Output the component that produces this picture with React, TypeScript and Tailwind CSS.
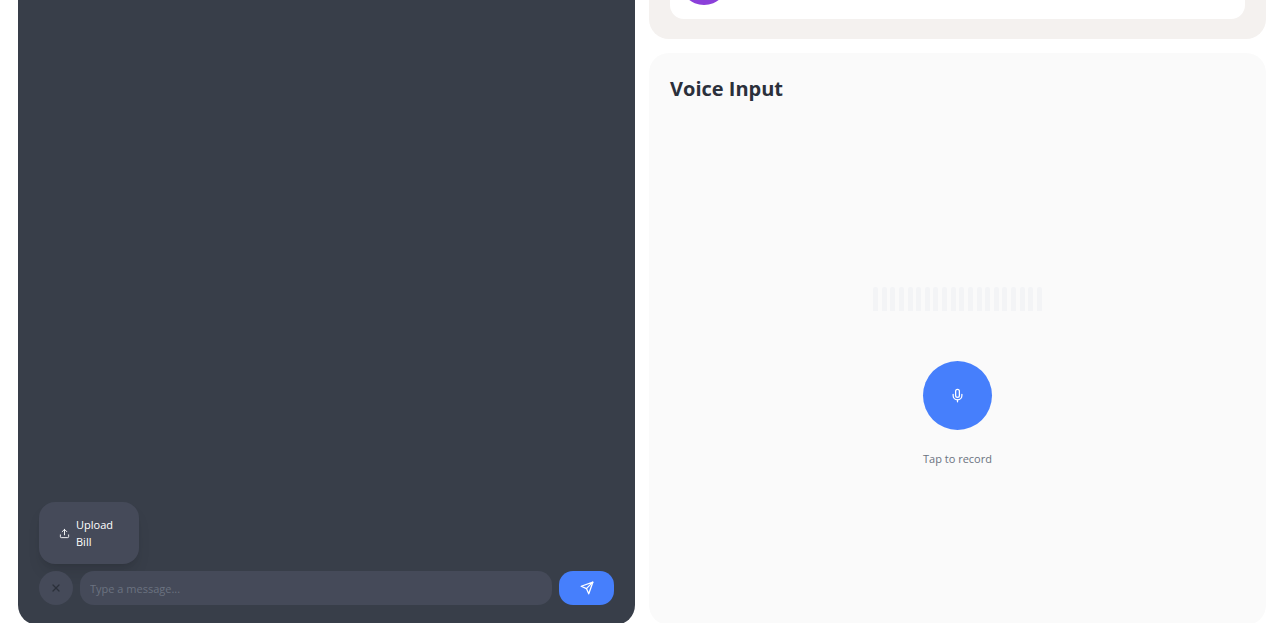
import React from 'react';
import { Mic, Upload, X } from 'lucide-react';

const BAR_COUNT = 20;

const SendIcon: React.FC = () => (
  <svg
    viewBox="0 0 24 24"
    className="size-3.5"
    fill="none"
    stroke="currentColor"
    strokeWidth="2.2"
    strokeLinecap="round"
    strokeLinejoin="round"
    aria-hidden="true"
  >
    <path d="m22 2-7 20-4-9-9-4Z" />
    <path d="M22 2 11 13" />
  </svg>
);

const ChatPanel: React.FC = () => (
  <section className="flex flex-col justify-end rounded-b-[20px] bg-[#383e49] px-[21px] py-5">
    <div className="mb-[7px] w-[100px] rounded-2xl bg-[#454a59] p-2 shadow-lg">
      <button className="flex w-full items-center gap-1.5 py-1.5 pl-3 text-left text-[11px] leading-[17px] text-white">
        <Upload className="size-[11px] shrink-0" />
        <span className="w-10">Upload Bill</span>
      </button>
    </div>
    <form className="flex gap-[7px]" onSubmit={e => e.preventDefault()}>
      <button
        type="button"
        aria-label="Close menu"
        className="flex size-[34px] shrink-0 items-center justify-center rounded-full bg-[#454a59] text-[#2b303a]"
      >
        <X className="size-3" strokeWidth={2.5} />
      </button>
      <input
        type="text"
        aria-label="Message"
        placeholder="Type a message..."
        className="h-[34px] min-w-0 flex-1 rounded-[14px] bg-[#454a59] px-2.5 text-[11px] text-white outline-none placeholder:text-[#6b7280]"
      />
      <button
        type="submit"
        aria-label="Send"
        className="flex h-[34px] w-[55px] shrink-0 items-center justify-center rounded-[14px] bg-[#467ffc] text-white"
      >
        <SendIcon />
      </button>
    </form>
  </section>
);

const SummaryPanel: React.FC = () => (
  <section className="rounded-b-[20px] bg-[#f4f1ef] px-[21px] pb-5">
    <div className="h-[19px] overflow-hidden rounded-b-[14px] bg-white px-2.5">
      <div className="-mt-[43px] size-12 rounded-full bg-[#8b3fd9]" />
    </div>
  </section>
);

const VoicePanel: React.FC = () => (
  <section className="flex flex-1 flex-col rounded-[20px] bg-[#fafafa] px-[21px] py-5">
    <h2 className="text-xl leading-8 font-bold text-[#2b303b]">Voice Input</h2>
    <div className="flex flex-1 flex-col items-center justify-center pt-11">
      <div className="flex h-6 w-[169px] justify-between">
        {Array.from({ length: BAR_COUNT }, (_, i) => (
          <span key={i} className="w-[5px] rounded-t-xs bg-[#f3f4f6]" />
        ))}
      </div>
      <button
        id="record"
        aria-label="Record"
        className="mt-[50px] flex size-[69px] items-center justify-center rounded-full bg-[#467ffc] text-white"
      >
        <Mic className="size-[15px]" />
      </button>
      <label htmlFor="record" className="mt-5 text-[11px] leading-[18px] text-[#6b7280]">
        Tap to record
      </label>
    </div>
  </section>
);

const App: React.FC = () => (
  <main className="h-screen overflow-hidden bg-white font-['Segoe_UI','Open_Sans',sans-serif]">
    <div className="grid min-h-[calc(100vh+2px)] grid-cols-2 gap-3.5 pr-3.5 pl-[18px]">
      <ChatPanel />
      <div className="flex flex-col gap-3.5">
        <SummaryPanel />
        <VoicePanel />
      </div>
    </div>
  </main>
);

export default App;
